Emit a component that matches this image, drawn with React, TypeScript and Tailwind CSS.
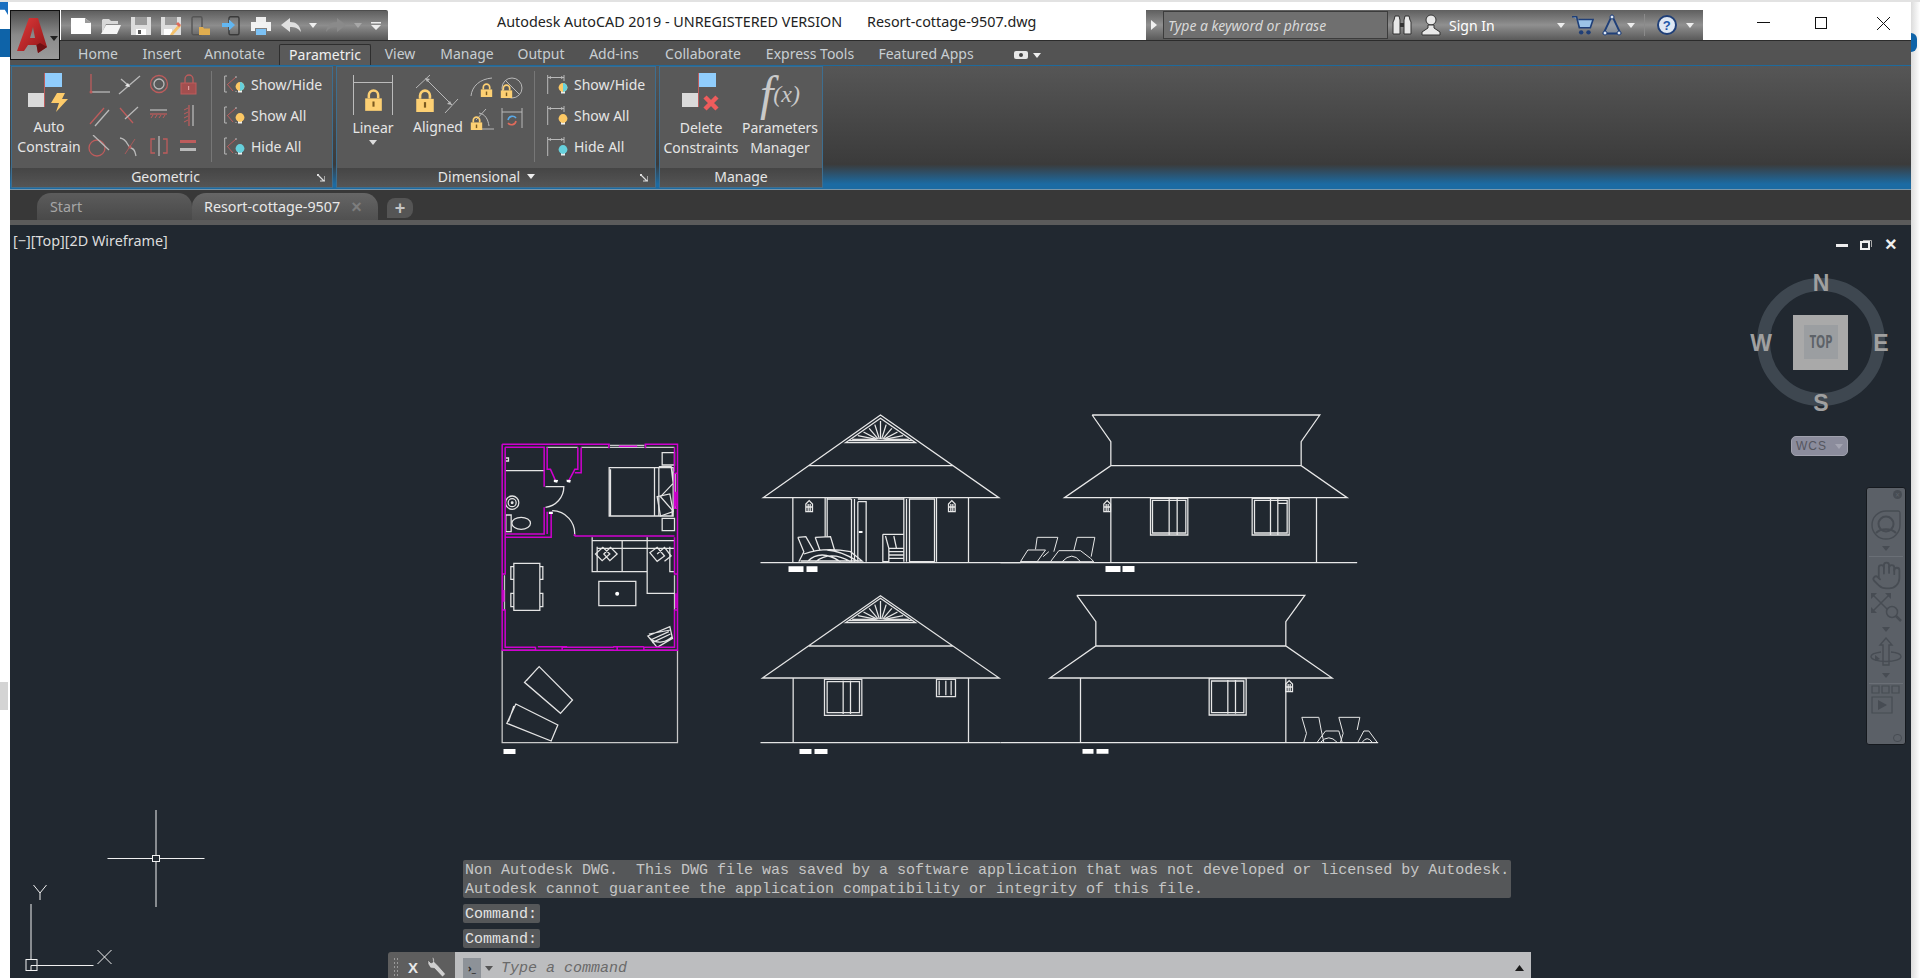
import React from "react";
import { Hand } from "lucide-react";

const ui = "font-['Noto_Sans',sans-serif]";

const Caret = ({ className = "" }: { className?: string }) => (
  <svg width="8" height="5" viewBox="0 0 8 5" className={className}>
    <path d="M0 0h8L4 5z" fill="currentColor" />
  </svg>
);

const AppLogo = () => (
  <svg width="32" height="36" viewBox="0 0 32 36">
    <defs>
      <linearGradient id="aRed" x1="0" y1="0" x2="1" y2="1">
        <stop offset="0" stopColor="#e23a3a" />
        <stop offset="1" stopColor="#8e1518" />
      </linearGradient>
    </defs>
    <path d="M1 34 L13 1 H22 L31 30 L22 36 L20.5 28 H12 L8 34 Z M14 21 H19 L17 10 Z" fill="url(#aRed)" fillRule="evenodd" />
    <path d="M22 36 L20.5 28 L24 26 L31 30 Z" fill="#6f1114" />
  </svg>
);

const QatIcon = ({ kind }: { kind: string }) => {
  const s = { width: 20, height: 20 };
  switch (kind) {
    case "new":
      return <svg {...s} viewBox="0 0 20 20"><path d="M0 2h14l6 5v11H0z" fill="#fff" /><path d="M14 2v5h6z" fill="#9a9a9a" /></svg>;
    case "open":
      return <svg {...s} viewBox="0 0 20 20"><path d="M2 3h6l2 2h7v3H5L1 17V4z" fill="#d8d8d8" /><path d="M5 9h15l-4 9H0z" fill="#f4f4f4" /></svg>;
    case "save":
      return <svg {...s} viewBox="0 0 20 20"><path d="M0 1h20v18H0z" fill="#dcdcdc" /><path d="M4 1h12v8H4z" fill="#9a9a9a" /><path d="M5 13h10v6H5z" fill="#fff" /><path d="M7 14h3v4H7z" fill="#555" /></svg>;
    case "saveas":
      return <svg {...s} viewBox="0 0 20 20"><path d="M0 1h20v18H0z" fill="#dcdcdc" /><path d="M4 1h12v8H4z" fill="#9a9a9a" /><path d="M3 13h8v6H3z" fill="#fff" /><path d="M10 17l8-9 2 2-8 9h-3z" fill="#f3c16b" /><path d="M17 6l3 3-2 2-3-3z" fill="#e06b5b" /></svg>;
    case "webopen":
      return <svg {...s} viewBox="0 0 20 20"><rect x="1" y="0.7" width="10" height="18" rx="1.5" fill="none" stroke="#555" strokeWidth="1.4" /><path d="M8 11h4l1 1.5h6V19H8z" fill="#e0ad4f" /></svg>;
    case "share":
      return <svg {...s} viewBox="0 0 20 20"><rect x="8" y="0.7" width="10" height="18" rx="1.5" fill="none" stroke="#3a3a3a" strokeWidth="1.4" /><path d="M1 7h7V3.5L14 9l-6 5.5V11H1z" fill="#62b7f2" /></svg>;
    case "print":
      return <svg {...s} viewBox="0 0 20 20"><path d="M5 1h10v5H5z" fill="#eee" /><path d="M0 6h20v9h-4v-3H4v3H0z" fill="#f2f2f2" /><path d="M5 13h10v6H5z" fill="#7cc1f4" /></svg>;
    case "undo":
      return <svg {...s} viewBox="0 0 20 20"><path d="M0 9l9-7v4c6 0 10 3 11 10-3-4-6-5-11-5v5z" fill="#e0e0e0" /></svg>;
    default:
      return <svg {...s} viewBox="0 0 20 20"><path d="M20 9l-9-7v4C5 6 1 9 0 16c3-4 6-5 11-5v5z" fill="#8a8a8a" /></svg>;
  }
};

const Lock = ({ size = 18, color = "#fdd073" }: { size?: number; color?: string }) => (
  <svg width={size} height={size * 1.15} viewBox="0 0 18 21">
    <path d="M4.5 9V6a4.5 4.5 0 0 1 9 0v3" fill="none" stroke={color} strokeWidth="2.4" />
    <rect x="1" y="9" width="16" height="12" fill={color} />
    <rect x="8" y="12" width="2" height="5" fill="#7a5a20" />
  </svg>
);

const red = "#bd5c5c";
const gry = "#b9b9b9";

const geoIcons = [
  <><path d="M4 1v18" stroke={red} strokeWidth="1.3" /><path d="M4 19h19" stroke={gry} strokeWidth="1.3" /><circle cx="4" cy="19" r="1.5" fill={red} /></>,
  <><path d="M2 21L23 3" stroke={gry} strokeWidth="1.3" /><path d="M4 6l8 7" stroke={gry} strokeWidth="1.3" /><path d="M13 14l-5-1 3-3z" fill="#e8e8e8" /></>,
  <><circle cx="12" cy="11" r="8.5" fill="none" stroke={red} strokeWidth="1.3" /><circle cx="12" cy="11" r="5" fill="none" stroke={gry} strokeWidth="1.3" /></>,
  <><path d="M8 10V6a4 4 0 0 1 8 0v4" fill="none" stroke={red} strokeWidth="1.3" /><rect x="4" y="10" width="15" height="11" fill="#a34f4f" stroke={red} /><rect x="11" y="13" width="1.2" height="4" fill="#e0a0a0" /></>,
  <><path d="M3 20L17 4" stroke={red} strokeWidth="1.3" /><path d="M8 22L22 6" stroke={gry} strokeWidth="1.3" /></>,
  <><path d="M3 4l13 15" stroke={red} strokeWidth="1.3" /><path d="M8 15L21 3" stroke={gry} strokeWidth="1.3" /></>,
  <><path d="M3 6h17" stroke={gry} strokeWidth="1.3" /><path d="M3 10h17" stroke={red} strokeWidth="1.3" /><path d="M4 14l2-3M8 14l2-3M12 14l2-3M16 14l2-3" stroke={red} /></>,
  <><path d="M16 1v21" stroke={gry} strokeWidth="1.3" /><path d="M12 1v21" stroke={red} strokeWidth="1.3" /><path d="M7 6l4-2M7 10l4-2M7 14l4-2M7 18l4-2" stroke={red} /></>,
  <><circle cx="10" cy="13" r="8" fill="none" stroke={red} strokeWidth="1.3" /><path d="M6 0l16 15" stroke={gry} strokeWidth="1.3" /></>,
  <><path d="M3 3c8 1 7 9 11 10s4 4 5 8" fill="none" stroke={gry} strokeWidth="1.3" /><circle cx="13" cy="12" r="1.5" fill={red} /><path d="M18 4L8 19" stroke={red} strokeWidth="0.8" /></>,
  <><path d="M12 1v20" stroke={gry} strokeWidth="1.3" /><path d="M8 4H4v14h4M16 4h4v14h-4" fill="none" stroke={red} strokeWidth="1.3" /></>,
  <><rect x="3" y="5" width="16" height="3" fill={red} /><rect x="3" y="13" width="16" height="3" fill={gry} /></>,
];

const Bulb = ({ mode, x, y }: { mode: string; x: number; y: number }) => (
  <g transform={`translate(${x} ${y})`}>
    <path d="M-2 5h4v2.5h-4z" fill="#eee" />
    <circle r="4.4" cy="1.5" fill={mode === "hide" ? "#66d0dc" : "#fcc864"} />
    {mode === "both" && <path d="M0 -2.9a4.4 4.4 0 0 1 0 8.8z" fill="#66d0dc" />}
  </g>
);

const GeoToggleIcon = ({ mode }: { mode: string }) => (
  <svg width="22" height="20" viewBox="0 0 22 20">
    <path d="M3 1H.7v16H3" fill="none" stroke={gry} strokeWidth="1" />
    <path d="M3 9l6 7M4 9l8-7" stroke={red} strokeWidth="1" fill="none" />
    <path d="M12 1v2M12 16v1" stroke={gry} />
    <Bulb mode={mode} x={16} y={10} />
  </svg>
);

const DimToggleIcon = ({ mode }: { mode: string }) => (
  <svg width="22" height="20" viewBox="0 0 22 20">
    <path d="M.7 0v19M17 0v6M1 2.5h16" stroke={gry} strokeWidth="1" fill="none" />
    <path d="M1 2.5l3-1.6v3.2zM17 2.5l-3-1.6v3.2z" fill={gry} />
    <Bulb mode={mode} x={16} y={11} />
  </svg>
);

const ToggleRows = ({ kind }: { kind: "geo" | "dim" }) => {
  const rows = [["Show/Hide", "both"], ["Show All", "show"], ["Hide All", "hide"]];
  const Icon = kind === "geo" ? GeoToggleIcon : DimToggleIcon;
  return (
    <div className="flex flex-col gap-[11px] pt-[8px]">
      {rows.map(([label, mode]) => (
        <div key={label} className="flex h-[20px] items-center gap-[5px] whitespace-nowrap text-[14px] leading-none text-[#e6e6e6]">
          <Icon mode={mode} />
          <span>{label}</span>
        </div>
      ))}
    </div>
  );
};

const Panel = ({ title, width, extra, launcher, children }: { title: string; width: string; extra?: boolean; launcher?: boolean; children: React.ReactNode }) => (
  <div className={`${width} flex h-[122px] flex-col border border-[#3d6e90] bg-[#595959]`}>
    <div className="flex h-[101px] items-start">{children}</div>
    <div className={`relative flex h-[19px] items-center justify-center gap-[7px] bg-gradient-to-b from-[#454545] to-[#555555] pb-[2px] text-[14px] text-[#e6e6e6] ${extra ? "pr-[19px]" : launcher ? "pr-[13px]" : ""}`}>
      <span>{title}</span>
      {extra && <Caret className="text-[#eee]" />}
      {launcher && (
        <svg width="8" height="8" viewBox="0 0 8 8" className="absolute right-[7px] top-[6px]">
          <path d="M0 .5h2M.5 0v2M1 1l6 6M3 7h5V2" stroke="#ddd" fill="none" strokeWidth="1.2" />
        </svg>
      )}
    </div>
  </div>
);

const Ribbon = () => (
  <div className="flex h-[124px] gap-[3px] border-t border-[#1e6a9c] pl-[1px] bg-[linear-gradient(180deg,#565656_0%,#3b3b3b_80%,#1c6ba3_96%,#1c6ba3_100%)]">
    <Panel title="Geometric" width="w-[322px]" launcher>
      <div className="flex w-[72px] flex-col items-center pl-[2px] pt-[6px] text-center text-[14px] leading-[20px] text-[#e6e6e6]">
        <svg width="44" height="40" viewBox="0 0 44 40">
          <rect x="1" y="20" width="17" height="14" fill="#dadada" />
          <rect x="18" y="0" width="17" height="14" fill="#90cdfc" />
          <path d="M17.5 0v34" stroke={red} />
          <path d="M30 20h8l-3 6h6L29 39l3-9h-8z" fill="#fdcb6a" />
        </svg>
        <span className="mt-[4px]">Auto</span>
        <span>Constrain</span>
      </div>
      <div className="grid w-[120px] grid-cols-[repeat(4,30px)] grid-rows-[repeat(3,31px)] place-items-center pt-[2px]">
        {geoIcons.map((ic, i) => (
          <svg key={i} width="24" height="24" viewBox="0 0 24 24">{ic}</svg>
        ))}
      </div>
      <div className="ml-[7px] mr-[12px] mt-[4px] h-[91px] w-px bg-[#777]" />
      <ToggleRows kind="geo" />
    </Panel>
    <Panel title="Dimensional" width="w-[320px]" extra launcher>
      <div className="flex w-[72px] flex-col items-center pt-[8px] text-[14px] leading-[20px] text-[#e6e6e6]">
        <div className="relative h-[40px] w-[40px] border-x border-[#bbb]">
          <div className="absolute left-0 right-0 top-[7px] border-t border-[#bbb]" />
          <div className="absolute left-[10px] top-[14px]"><Lock size={19} /></div>
        </div>
        <span className="mt-[3px]">Linear</span>
        <Caret className="mt-[2px] text-[#ddd]" />
      </div>
      <div className="flex w-[58px] flex-col items-center pt-[6px] text-[14px] leading-[20px] text-[#e6e6e6]">
        <div className="relative h-[40px] w-[44px]">
          <svg width="44" height="40" viewBox="0 0 44 40" className="absolute left-0 top-0">
            <path d="M0 15L14 2M29 40L42 26M10 6l26 26" stroke={gry} fill="none" />
            <path d="M9 5l5 1-3 3zM36 32l-5-1 3-3z" fill={gry} />
          </svg>
          <div className="absolute left-[-1px] top-[16px]"><Lock size={20} /></div>
        </div>
        <span className="mt-[4px]">Aligned</span>
      </div>
      <div className="grid w-[66px] grid-cols-[repeat(2,30px)] grid-rows-[repeat(2,31px)] place-items-center pt-[5px]">
        <div className="relative h-[24px] w-[24px]"><svg width="24" height="24" viewBox="0 0 24 24" className="absolute"><path d="M1 20C2 10 10 3 22 2" fill="none" stroke={gry} /></svg><div className="absolute left-[10px] top-[7px]"><Lock size={13} /></div></div>
        <div className="relative h-[24px] w-[24px]"><svg width="24" height="24" viewBox="0 0 24 24" className="absolute"><circle cx="12" cy="12" r="10" fill="none" stroke={gry} /><path d="M6 5l13 13" stroke={gry} /></svg><div className="absolute left-0 top-[8px]"><Lock size={13} /></div></div>
        <div className="relative h-[24px] w-[24px]"><svg width="24" height="24" viewBox="0 0 24 24" className="absolute"><path d="M6 13L16 2M9 6c6 1 9 6 10 13M8 22h16" fill="none" stroke={gry} /></svg><div className="absolute left-0 top-[9px]"><Lock size={13} /></div></div>
        <svg width="22" height="22" viewBox="0 0 22 22"><path d="M1 0v20M21 0v20M1 4h20" stroke={gry} fill="none" /><path d="M7 12a4.5 4.5 0 0 1 8-2" fill="none" stroke="#5aa9e6" strokeWidth="1.6" /><path d="M15 13a4.5 4.5 0 0 1-8 2" fill="none" stroke="#e06b5b" strokeWidth="1.6" /></svg>
      </div>
      <div className="ml-[1px] mr-[12px] mt-[4px] h-[91px] w-px bg-[#777]" />
      <ToggleRows kind="dim" />
    </Panel>
    <Panel title="Manage" width="w-[164px]">
      <div className="flex w-[80px] flex-col items-center pl-[2px] pt-[6px] text-[14px] leading-[20px] text-[#e6e6e6]">
        <svg width="42" height="42" viewBox="0 0 42 42" className="ml-[2px]">
          <rect x="1" y="20" width="17" height="14" fill="#dadada" />
          <rect x="18" y="0" width="17" height="14" fill="#90cdfc" />
          <path d="M17.5 0v34" stroke={red} />
          <path d="M24 24l12 12M36 24L24 36" stroke="#ee5c5c" strokeWidth="4.5" />
        </svg>
        <span className="mt-[3px]">Delete</span>
        <span>Constraints</span>
      </div>
      <div className="flex w-[80px] flex-col items-center pt-[6px] text-[14px] leading-[20px] text-[#e6e6e6]">
        <div className="flex h-[42px] items-center font-['Liberation_Serif',serif] italic leading-none text-[#c9c9c9]">
          <span className="text-[48px]">f</span>
          <span className="text-[24px]">(x)</span>
        </div>
        <span className="mt-[3px]">Parameters</span>
        <span>Manager</span>
      </div>
    </Panel>
  </div>
);

const Gable = ({ cx, y }: { cx: number; y: number }) => {
  const rays = [-5, -4, -3, -2, -1, 0, 1, 2, 3, 4, 5];
  return (
    <g>
      <path d={`M${cx - 105} ${y + 73}L${cx} ${y}L${cx + 105} ${y + 73}Z M${cx - 95} ${y + 67}H${cx + 95}`} />
      {rays.map((k) => (
        <path key={k} d={`M${cx + k * 3} ${y + 63}L${cx + k * 17} ${y + 8 + Math.abs(k) * 11}`} strokeWidth="3.8" />
      ))}
    </g>
  );
};

const Lantern = ({ x, y }: { x: number; y: number }) => (
  <g transform={`translate(${x} ${y})`}>
    <path d="M-10 17V-6L0 -16L10 -6V17ZM-10 3H10M-3 -6V17M3 -6V17" />
  </g>
);

const Drawing = () => (
  <svg viewBox="10 225 1900 753" className="absolute inset-0 h-full w-full" fill="none" strokeLinejoin="miter">
    {/* floor plan + rear elevation, traced in 3x crop coordinates */}
    <g transform="translate(480 430) scale(0.33333)" stroke="#e4e4e4" strokeWidth="3.8">
      <path stroke="#c9c9c9" d="M198 52H292M302 52H385M495 52H582M388 46H492M388 52H492M65 661V938H591V661M65 661H165M250 661H400M490 661H591M72 436V540M582 436V540M585 130V235" />
      <path d="M386 113H578V258H386ZM390 118V258M522 113V258M535 113V258M535 110H572L578 160L540 200L575 240V258" />
      <path d="M530 200L568 192L578 245L540 258ZM545 68H582V105H545ZM545 265H582V302H545ZM76 122H192M76 84H84V93H76" />
      <circle cx="95" cy="218" r="20" /><circle cx="95" cy="218" r="12" /><circle cx="95" cy="218" r="2.5" fill="#fff" />
      <path d="M76 255H92V305H76Z" /><ellipse cx="122" cy="280" rx="28" ry="18" />
      <path d="M195 170H250A62 62 0 0 1 195 232M215 242A68 68 0 0 1 282 318" />
      <path d="M335 322V425H500M335 332H582M350 355H582M350 350V425M425 332V425M500 322V490H582M568 350V425H582" />
      <path d="M345 372L367 352L388 372L365 392ZM370 372L390 352L410 372L388 392ZM508 368L530 352L552 378L530 394ZM530 372L552 352L572 378L552 394" />
      <path d="M100 400H178V541H100ZM91 410H100V448H91ZM91 490H100V530H91ZM178 410H187V448H178ZM178 490H187V530H178ZM355 454H466V527H355Z" />
      <circle cx="410" cy="491" r="6" fill="#fff" stroke="none" />
      <path d="M502 618L568 590L576 625L530 652ZM510 630L565 605M515 638L570 612M505 612L570 600M508 625C530 645 560 635 575 620" />
      <path d="M176 710L276 810L240 850L132 757ZM170 716L138 752M106 822L232 885L212 933L79 880ZM100 828L84 875" />
      <path stroke="#d000d0" strokeWidth="4.500" d="M65 43H388M492 43H591V661H65V43M74 52V432M74 540V652H165M245 652H400M490 652H582V540M582 432V322M582 235V130M582 125V52M74 52H191V170M191 232V312H74M74 322H212V245M200 245V312M282 318H582M282 318V312M200 52V118H210L225 152M292 52V118H283L265 152M302 52V128H283M415 49H470M172 650H260M398 650H490M70 480V515M586 185V230M586 490V535M65 432H76M65 540H76M580 432H591M580 540H591M580 130H591M580 235H591M385 43V55M495 43V55M165 650V662M245 650V662M410 650V662M490 650V662" />
      <path fill="#fff" stroke="none" d="M69 957h36v15H69zM220 149l13 1-3 8-10-2zM258 149l13 1-2 8-10-2zM205 245h12v7h-12z" />
      {/* third elevation, same crop */}
      <path d="M846 744L1200 497L1556 744ZM985 648H1418M938 744V938M1464 744V938M840 938H1560" />
      <Gable cx={1200} y={505} />
      <path d="M1032 748H1144V856H1032ZM1040 755H1137V848H1040ZM1088 752V852M1110 752V852M1368 748H1425V800H1368ZM1376 752V796M1396 752V796M1412 752V796" />
      <path fill="#fff" stroke="none" d="M957 957h36v15h-36zM1002 957h39v15h-39z" />
    </g>
    {/* front elevation */}
    <g transform="translate(740 400) scale(0.33333)" stroke="#e8e8e8" strokeWidth="3.8">
      <path d="M68 293L420 45L775 293ZM205 197H637M157 293V488M684 293V488M60 488H840" />
      <Gable cx={420} y={55} />
      <path d="M254 293V410M260 293V410M333 297V485M342 297V485M352 305H377V485M352 305V485M260 297H333M490 293V485M498 297V485M507 297H582V485H507ZM588 293V485M352 297H490" />
      <path d="M172 412L196 410L220 452M172 412L190 455L175 485M224 412L270 410L282 450M224 412L238 450M190 462Q250 440 330 455L365 483H180M200 485Q240 445 300 485M225 485Q270 450 330 485M260 450Q300 452 350 483" />
      <path d="M427 403H490M427 403V485H445V445H490M435 408L445 445M460 408L468 445M445 455H490M445 465H490M445 475H490" />
      <Lantern x={206} y={318} /><Lantern x={634} y={318} />
      <path fill="#fff" stroke="none" d="M144 499h45v17h-45zM198 499h33v17h-33zM355 393h11v6h-11z" />
    </g>
    {/* side elevations */}
    <g transform="translate(1000 400) scale(0.33333)" stroke="#e8e8e8" strokeWidth="3.8">
      <path d="M0 488H1070M275 45H958L902 125V197M275 45L331 125V197M331 197H902L1040 293H192ZM331 293V488M948 293V488" />
      <path d="M450 295H562V405H450ZM456 301H556V399H456ZM506 297V403M530 297V403M755 295H866V405H755ZM762 301H860V399H762ZM810 297V403M832 297V403M832 310H862" />
      <Lantern x={320} y={318} />
      <path strokeWidth="3" d="M60 485L82 450H135L110 485ZM105 448L110 412H172L160 455M150 485L175 452H240L270 475L280 485M220 452L230 412H283L272 470M185 485Q215 452 240 485M128 470L145 455M60 485H280" />
      <path fill="#fff" stroke="none" d="M315 498h45v18h-45zM366 498h36v18h-36z" />
      <path d="M0 1028H1133M229 586H913L856 665V738M229 586L286 665V738M286 738H856L995 834H148ZM240 834V1028M856 834V1028" />
      <path d="M626 836H737V945H626ZM633 843H730V938H633ZM682 840V941M705 840V941" />
      <Lantern x={866} y={858} />
      <path strokeWidth="3" d="M904 952H955L962 990L970 1027M904 952L918 1000L910 1027M1015 952H1078L1070 990M1015 952L1028 1000L1020 1027M950 1027L975 993H1015L1025 1027M960 1027Q985 1000 1010 1027M1072 1027L1090 993H1105L1130 1027M1085 1027Q1100 1005 1115 1027" />
      <path fill="#fff" stroke="none" d="M246 1047h33v14h-33zM288 1047h36v14h-36z" />
    </g>
    {/* crosshair */}
    <g stroke="#f0f0f0" strokeWidth="1">
      <path d="M107 858.5H151.5M158.5 858.5H204M155.5 810V855M155.5 862V907" />
      <rect x="152" y="855.5" width="7" height="6" />
      <path d="M30.5 904V959M37 965.5H93" />
      <rect x="25.5" y="959.5" width="11" height="11" />
      <path d="M30.5 970V965.5H37" />
      <path d="M33 885L39.5 893V900M46 885L39.5 893M97 950L111 964M111 950L97 964" />
    </g>
  </svg>
);

const ViewCube = () => (
  <svg width="160" height="160" viewBox="0 0 160 160" className="absolute left-[1735px] top-[40px]">
    <circle cx="76" cy="77" r="57.5" fill="none" stroke="#3e4750" strokeWidth="13" />
    <rect x="48" y="50" width="55" height="55" fill="#a9a9a9" />
    <rect x="59" y="60" width="34" height="34" fill="#9b9ea1" />
    <g fontFamily="'Liberation Sans',sans-serif" fontWeight="700" fill="#a0a0a0" fontSize="23" textAnchor="middle">
      <text x="76" y="26">N</text>
      <text x="76" y="146">S</text>
      <text x="16" y="86">W</text>
      <text x="136" y="86">E</text>
    </g>
    <text x="76" y="83" textAnchor="middle" fontFamily="'Noto Sans',sans-serif" fontWeight="700" fontSize="18" fill="#5d6268" textLength="23" lengthAdjust="spacingAndGlyphs">TOP</text>
  </svg>
);

const NavBar = () => {
  const c = "#474c53";
  return (
    <div className="absolute left-[1856px] top-[262px] flex h-[258px] w-[40px] flex-col items-center rounded-[3px] border border-[#15191e] bg-[#5b6067]">
      <div className="relative h-[21px] w-full">
        <div className="absolute right-[3px] top-[2px] flex h-[9px] w-[9px] items-center justify-center rounded-full bg-[#474c53] text-[8px] leading-none text-[#5b6067]">×</div>
      </div>
      <svg width="30" height="32" viewBox="0 0 30 32"><path d="M15 2h12c2 0 2 1 2 3v11a14 14 0 1 1-14-14z" fill="none" stroke={c} strokeWidth="1.4" /><circle cx="15" cy="15" r="7.5" fill="none" stroke={c} strokeWidth="2" /><path d="M5 24c5-5 15-5 20 0" fill="none" stroke={c} strokeWidth="2" /></svg>
      <Caret className="mt-[5px] text-[#474c53]" />
      <div className="mt-[5px] h-px w-[34px] bg-[#6a6f76]" />
      <Hand size={31} className="mt-[3px] text-[#474c53]" strokeWidth={1.4} />
      <svg width="32" height="30" viewBox="0 0 32 30" className="mt-[1px]"><path d="M1 1l6 0-6 6zM21 1h-6l6 6zM1 21v-6l6 6z" fill={c} /><path d="M3 3l17 17M19 3L3 19" stroke={c} strokeWidth="1.5" /><circle cx="22" cy="20" r="5.5" fill="#5b6067" stroke={c} strokeWidth="1.5" /><path d="M26 24l5 5" stroke={c} strokeWidth="2.5" /></svg>
      <Caret className="mt-[5px] text-[#474c53]" />
      <svg width="32" height="32" viewBox="0 0 32 32" className="mt-[5px]"><path d="M13 28V8H10L16 1l6 7h-3v20z" fill="none" stroke={c} strokeWidth="1.4" /><path d="M11 15C4 16 1 18 1 19.5c0 3 7 5 15 5s15-2 15-5c0-2-4-4-10-4.500" fill="none" stroke={c} strokeWidth="1.4" /><path d="M5 18l5 4-5 2z" fill={c} /></svg>
      <Caret className="mt-[4px] text-[#474c53]" />
      <div className="mt-[5px] h-px w-[34px] bg-[#6a6f76]" />
      <svg width="30" height="32" viewBox="0 0 30 32" className="mt-[1px]"><path d="M1 1h7v7H1zM11 1h7v7h-7zM21 1h7v7h-7zM1 12h20v16H1z" fill="none" stroke={c} strokeWidth="1.2" /><path d="M7 15l9 5-9 5z" fill={c} /></svg>
      <div className="absolute bottom-[2px] right-[3px] h-[8px] w-[9px] rounded-full border border-[#474c53]" />
    </div>
  );
};

const CommandLine = () => (
  <>
    <div className="absolute left-[453px] top-[635px] flex flex-col gap-[6px] font-['Liberation_Mono',monospace] text-[15px] leading-[19px]">
      <div className="h-[38px] w-[1048px] whitespace-pre rounded-[2px] bg-[#555759] pl-[2px] pt-[1px] text-[#c6c6c6]">
        {"Non Autodesk DWG.  This DWG file was saved by a software application that was not developed or licensed by Autodesk.\nAutodesk cannot guarantee the application compatibility or integrity of this file."}
      </div>
      <div className="h-[19px] w-[77px] rounded-[2px] bg-[#555759] pl-[2px] leading-[21px] text-[#e4e4e4]">Command:</div>
      <div className="h-[19px] w-[77px] rounded-[2px] bg-[#555759] pl-[2px] leading-[21px] text-[#e4e4e4]">Command:</div>
    </div>
    <div className="absolute bottom-0 left-[378px] flex h-[26px] w-[1143px] items-stretch rounded-t-[2px]">
      <div className="flex w-[67px] items-center rounded-tl-[3px] bg-[#5e5e5e] pl-[5px] pt-[4px]">
        <div className="h-[20px] w-[5px] bg-[radial-gradient(#9a9a9a_1px,transparent_1px)] bg-[length:3px_4px]" />
        <span className="ml-[10px] font-['Liberation_Sans',sans-serif] text-[15px] font-bold leading-none text-[#e8e8e8]">X</span>
        <svg width="20" height="22" viewBox="0 0 20 22" className="ml-[9px]"><path d="M5 1l2 1 .5 4 4 4 7 8-3 3-8-8.500-4-.5L1 8V4l3 3 2-1z" fill="#cfcfcf" stroke="#4a4a4a" strokeWidth=".6" /></svg>
      </div>
      <div className="flex flex-1 items-center bg-[#bcbdbf] pl-[8px] pr-[7px] pt-[6px]">
        <div className="flex h-[20px] w-[18px] items-center justify-center bg-[#8d9298] text-[10px] font-bold leading-none text-[#2b2b2b]">›_</div>
        <Caret className="ml-[4px] text-[#555]" />
        <span className="ml-[8px] font-['Liberation_Mono',monospace] text-[15px] italic leading-none text-[#6a6a6a]">Type a command</span>
        <svg width="9" height="6" viewBox="0 0 9 6" className="ml-auto"><path d="M0 6h9L4.500 0z" fill="#1b1b1b" /></svg>
      </div>
    </div>
  </>
);

const TitleBar = () => (
  <div className="relative flex h-[38px] items-start bg-white">
    <div className="ml-[51px] mt-[8px] flex h-[30px] w-[327px] items-center gap-[10px] rounded-tr-[2px] border-t border-[#4d4d4d] bg-gradient-to-b from-[#5f5f5f] via-[#8d8d8d] to-[#565656] pl-[10px]">
      {["new", "open", "save", "saveas", "webopen", "share", "print", "undo"].map((k) => <QatIcon key={k} kind={k} />)}
      <Caret className="-ml-[2px] text-[#eee]" />
      <div className="ml-[-1px]"><QatIcon kind="redo" /></div>
      <Caret className="-ml-[2px] text-[#a8a8a8]" />
      <svg width="10" height="8" viewBox="0 0 10 8" className="-ml-[1px]"><path d="M0 0h10v1.500H0zM0 3h10L5 8z" fill="#eee" /></svg>
    </div>
    <div className="ml-[109px] mt-[11px] w-[346px] whitespace-nowrap text-[14.35px] leading-[18px] text-[#222]">Autodesk AutoCAD 2019 - UNREGISTERED VERSION</div>
    <div className="ml-[24px] mt-[11px] w-[145px] whitespace-nowrap text-[14.35px] leading-[18px] text-[#222]">Resort-cottage-9507.dwg</div>
    <div className="ml-[134px] mt-[8px] flex h-[30px] w-[557px] items-center bg-gradient-to-b from-[#5f5f5f] via-[#909090] to-[#5a5a5a]">
      <svg width="6" height="10" viewBox="0 0 6 10" className="ml-[5px]"><path d="M0 0l6 5-6 5z" fill="#f0f0f0" /></svg>
      <div className="ml-[6px] flex h-[28px] w-[225px] items-center border border-[#3c3c3c] bg-[#6f6f6f] pl-[4px] text-[14px] italic text-[#d9d9d9]">Type a keyword or phrase</div>
      <svg width="20" height="20" viewBox="0 0 20 20" className="ml-[4px]"><path d="M2 5l1-4h4l1 4v14H1V7zM12 5l1-4h4l1 4 1 2v12h-7z" fill="#e8e8e8" stroke="#333" /><path d="M8 8h4v4H8z" fill="#333" /></svg>
      <svg width="20" height="22" viewBox="0 0 20 22" className="ml-[9px]"><circle cx="10" cy="6" r="5" fill="#e8e8e8" stroke="#333" /><path d="M7 11h6v3l6 4v3H1v-3l6-4z" fill="#e8e8e8" stroke="#333" /></svg>
      <span className="ml-[8px] text-[14px] text-white">Sign In</span>
      <Caret className="ml-[62px] text-[#eee]" />
      <svg width="22" height="22" viewBox="0 0 24 24" className="ml-[7px]"><path d="M0 3h5l3 12h12l3-9H7" fill="#9cc3e6" stroke="#1f3f78" strokeWidth="1.8" /><circle cx="10" cy="20" r="2.400" fill="#1f3f78" /><circle cx="18" cy="20" r="2.400" fill="#1f3f78" /></svg>
      <svg width="20" height="22" viewBox="0 0 20 22" className="ml-[8px]"><path d="M10 1.500L18.500 19.500H1.500Z" fill="#a9c3e6" fillOpacity="0.3" stroke="#1f3f78" strokeWidth="1.8" strokeLinejoin="round" /><circle cx="10" cy="3" r="2" fill="#dfe8f4" stroke="#1f3f78" /><circle cx="3" cy="19" r="2" fill="#dfe8f4" stroke="#1f3f78" /><circle cx="17" cy="19" r="2" fill="#dfe8f4" stroke="#1f3f78" /></svg>
      <Caret className="ml-[5px] text-[#eee]" />
      <div className="ml-[9px] h-[22px] w-px bg-[#8a8a8a]" />
      <div className="ml-[12px] flex h-[20px] w-[20px] items-center justify-center rounded-full border-2 border-[#1f3f78] bg-[#dfe8f4] font-['Liberation_Sans',sans-serif] text-[13px] font-bold leading-none text-[#2357a8]">?</div>
      <Caret className="ml-[9px] text-[#eee]" />
    </div>
    <svg width="13" height="13" viewBox="0 0 13 13" className="ml-[54px] mt-[14px]"><path d="M0 6.500h13" stroke="#111" /></svg>
    <svg width="12" height="12" viewBox="0 0 12 12" className="ml-[45px] mt-[15px]"><rect x="0.5" y="0.500" width="11" height="11" fill="none" stroke="#111" /></svg>
    <svg width="13" height="13" viewBox="0 0 13 13" className="ml-[50px] mt-[15px]"><path d="M0 0l13 13M13 0L0 13" stroke="#111" /></svg>
  </div>
);

const tabs = [
  ["Home", "w-[64px]"], ["Insert", "w-[64px]"], ["Annotate", "w-[81px] mr-[4px]"], ["Parametric", "w-[92px]"], ["View", "w-[58px]"],
  ["Manage", "w-[76px]"], ["Output", "w-[72px]"], ["Add-ins", "w-[74px]"], ["Collaborate", "w-[104px]"], ["Express Tools", "w-[110px]"], ["Featured Apps", "w-[122px]"],
];

const RibbonTabs = () => (
  <div className="flex h-[25px] items-end border-t border-[#2b2b2b] bg-[#535353] pl-[56px] text-[14px] text-[#c8ced2]">
    {tabs.map(([label, w]) => (
      <div
        key={label}
        className={`flex h-[21px] items-center justify-center pb-[2px] ${w} ${label === "Parametric" ? "rounded-t-[2px] border border-b-0 border-[#2e2e2e] bg-[#5a5a5a] text-[#f0f0f0]" : ""}`}
      >
        {label}
      </div>
    ))}
    <div className="mb-[6px] ml-[27px] flex items-center gap-[5px]">
      <div className="flex h-[8px] w-[14px] items-center justify-center rounded-[2px] bg-[#e8e8e8]"><div className="h-[4px] w-[4px] rounded-full bg-[#444]" /></div>
      <Caret className="text-[#eee]" />
    </div>
  </div>
);

const DocTabs = () => (
  <div className="flex h-[31px] items-end border-t border-[#7b96a8] bg-[#383838] pl-[27px]">
    <div className="flex h-[27px] w-[155px] items-center rounded-t-[14px] bg-gradient-to-b from-[#5c5c5c] to-[#494949] pl-[13px] text-[14.3px] text-[#a6a6a6]">Start</div>
    <div className="flex h-[27px] w-[186px] items-center rounded-t-[14px] bg-gradient-to-b from-[#666666] to-[#505050] pl-[12px] text-[14.3px] text-[#e8e8e8]">
      Resort-cottage-9507
      <span className="ml-[11px] font-['Liberation_Sans',sans-serif] text-[18px] font-bold leading-none text-[#7d7d7d]">×</span>
    </div>
    <div className="mb-[2px] ml-[9px] flex h-[20px] w-[26px] items-center justify-center rounded-t-[8px] rounded-br-[8px] bg-[#555555] font-['Liberation_Sans',sans-serif] text-[18px] font-bold leading-none text-[#c4c4c4]">+</div>
  </div>
);

export default function App() {
  return (
    <div className={`${ui} flex h-[978px] w-[1920px] overflow-hidden border-t-2 border-[#e2e2e2] bg-white`}>
      <div className="flex w-[10px] flex-col">
        <div className="h-[13px] w-[8px] bg-[#1a6fc0] [clip-path:polygon(0_0,100%_0,100%_100%,60%_60%,0_60%)]" />
        <div className="mt-[14px] h-[28px] bg-[#0e63a8]" />
        <div className="mt-[625px] h-[28px] w-[8px] bg-[#d4d4d4]" />
      </div>
      <div className="flex w-[1901px] flex-col">
        <TitleBar />
        <div className="absolute left-[10px] top-[10px] z-10 flex h-[50px] w-[50px] items-center gap-[2px] border border-[#111] bg-gradient-to-b from-[#4f4f4f] via-[#8a8a8a] to-[#9a9a9a] pl-[5px]">
          <AppLogo />
          <Caret className="mt-[6px] text-[#222]" />
        </div>
        <RibbonTabs />
        <Ribbon />
        <DocTabs />
        <div className="h-[5px] bg-[#5b5b5b]" />
        <div className="relative flex-1 bg-[#212830] text-[14.4px] text-[#dcdcdc]">
          <Drawing />
          <div className="absolute left-[3px] top-[7px] leading-[18px]">[−][Top][2D Wireframe]</div>
          <div className="absolute left-[1826px] top-[9px] flex items-center gap-[12px]">
            <div className="mt-[3px] h-[3px] w-[12px] bg-[#eee]" />
            <svg width="12" height="12" viewBox="0 0 12 12"><path d="M3 2.500h8.500V9" fill="none" stroke="#aaa" /><rect x="1" y="4" width="8" height="7" fill="none" stroke="#eee" strokeWidth="2" /></svg>
            <span className="ml-[1px] font-['Liberation_Sans',sans-serif] text-[20px] font-bold leading-none text-[#eee]">×</span>
          </div>
          <ViewCube />
          <div className="absolute left-[1781px] top-[211px] flex h-[20px] w-[57px] items-center justify-between rounded-[5px] border border-[#a0a1ad] bg-[#8b8c9c] px-[4px] font-['Liberation_Sans',sans-serif] text-[12px] tracking-[1px] text-[#55565f]">
            WCS
            <Caret className="text-[#a4a5b2]" />
          </div>
          <NavBar />
          <CommandLine />
        </div>
      </div>
      <div className="flex-1 bg-gradient-to-r from-[#dcdcdc] to-white">
        <div className="mt-[31px] h-[19px] w-[6px] rounded-r-full bg-[#0e63a8]" />
      </div>
    </div>
  );
}
